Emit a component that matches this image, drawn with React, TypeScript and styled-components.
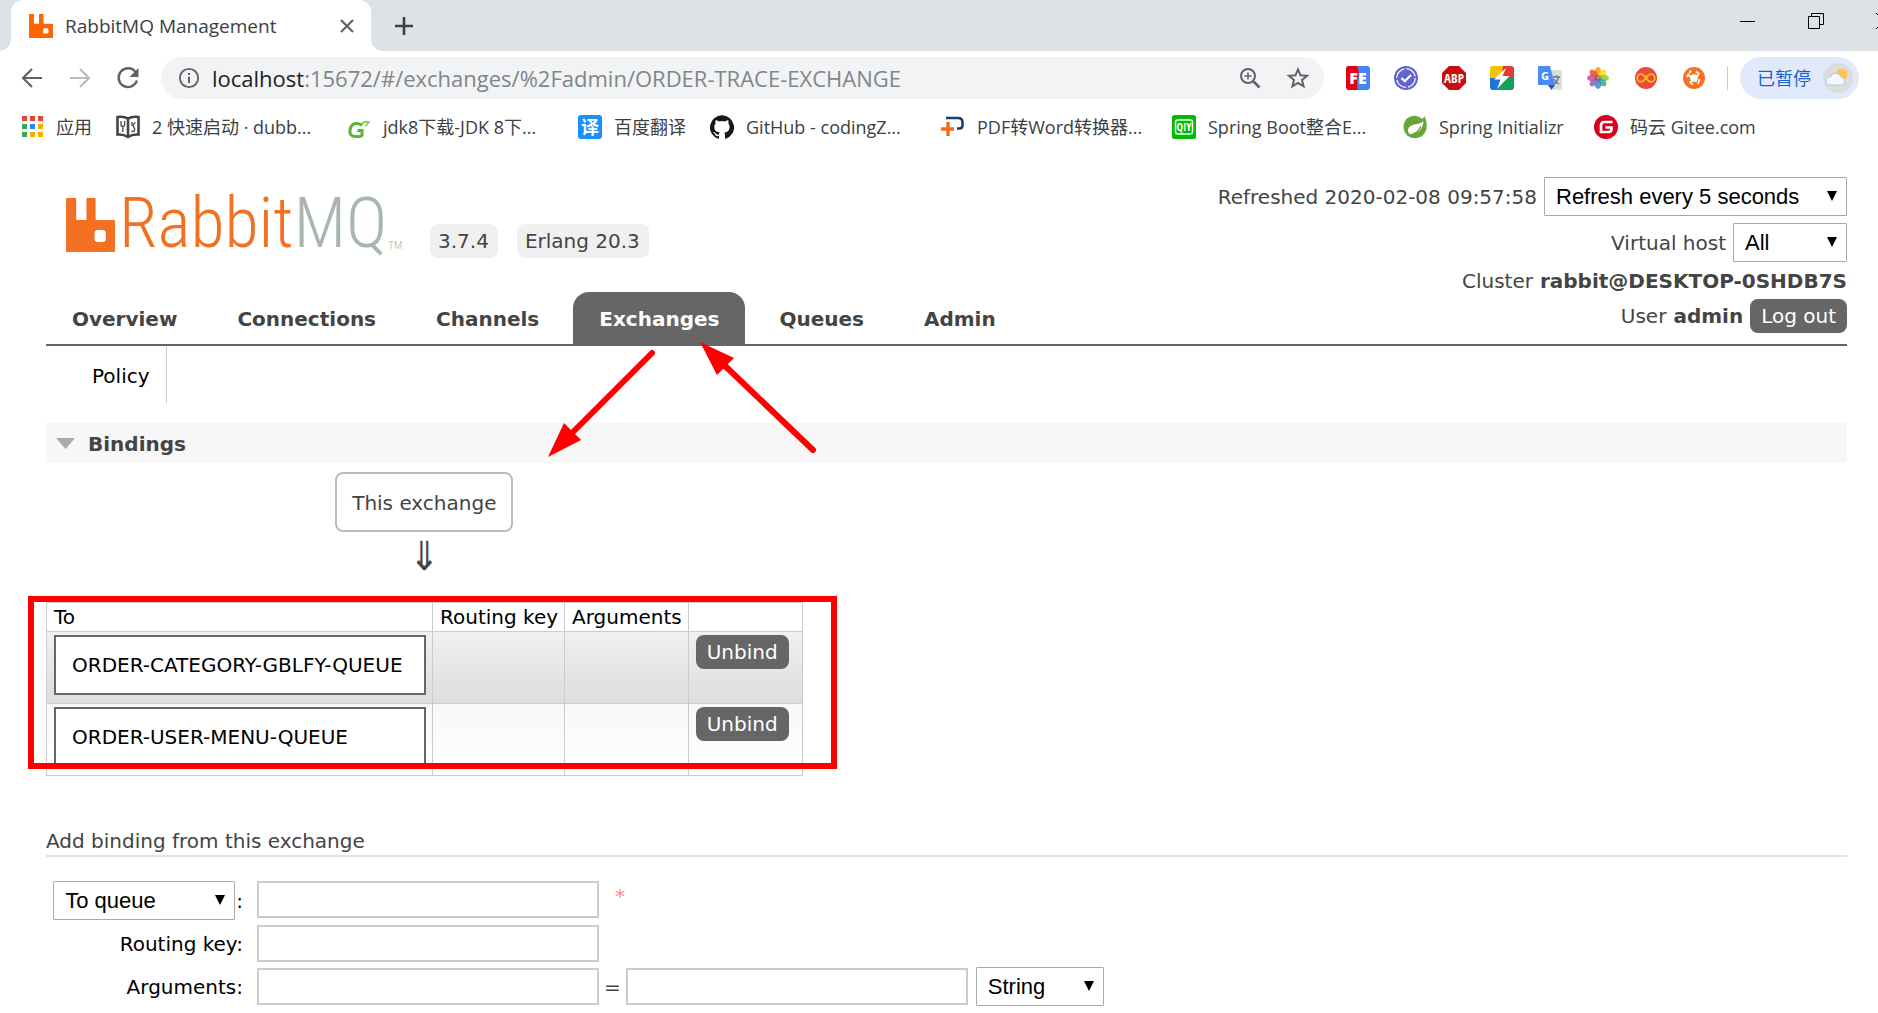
import React from 'react';
import styled, { createGlobalStyle, css } from 'styled-components';

const GlobalStyle = createGlobalStyle`
  *, *::before, *::after { box-sizing: border-box; }
  body {
    margin: 0;
    background: #fff;
    color: #444;
    font: 20px/24px "DejaVu Sans", Verdana, sans-serif;
    overflow: hidden;
  }
  button, input, select { font: inherit; color: inherit; margin: 0; }
  button { border: 0; padding: 0; background: none; cursor: pointer; }
  a { color: inherit; text-decoration: none; }
  svg { display: block; flex: none; }
`;

const uiFont = css`
  font-family: "Open Sans", "Noto Sans CJK SC", sans-serif;
`;

/* ---------- browser window ---------- */

const TabStrip = styled.div`
  ${uiFont}
  display: flex;
  height: 51px;
  padding-left: 11px;
  background: #dee1e6;
  overflow: hidden;
`;

const BrowserTab = styled.div`
  position: relative;
  display: flex;
  align-items: center;
  width: 360px;
  padding: 0 14px 0 18px;
  background: #fff;
  border-radius: 12px 12px 0 0;
  color: #3c4043;

  &::before, &::after {
    content: "";
    position: absolute;
    bottom: 0;
    width: 12px;
    height: 12px;
  }
  &::before {
    left: -12px;
    background: radial-gradient(circle at 0 0, transparent 12px, #fff 12px);
  }
  &::after {
    right: -12px;
    background: radial-gradient(circle at 100% 0, transparent 12px, #fff 12px);
  }
`;

const TabTitle = styled.span`
  flex: 1;
  margin-left: 12px;
  font-size: 19px;
  white-space: nowrap;
`;

const IconButton = styled.button<{ $w?: number }>`
  display: flex;
  align-items: center;
  justify-content: center;
  flex: none;
  width: ${(p) => p.$w ?? 48}px;
`;

const CaptionButtons = styled.div`
  display: flex;
  margin: 0 -40px 10px auto;
`;

const Toolbar = styled.div`
  ${uiFont}
  display: flex;
  align-items: center;
  height: 54px;
  padding: 0 19px 0 8px;
`;

const AddressBar = styled.div`
  display: flex;
  align-items: center;
  flex: 1;
  height: 42px;
  margin: 0 10px 0 9px;
  padding: 0 2px 0 17px;
  border-radius: 21px;
  background: #f1f3f4;
`;

const Url = styled.span`
  flex: 1;
  margin-left: 12px;
  font-size: 22px;
  color: #80868b;
  white-space: nowrap;

  b { font-weight: 400; color: #202124; }
`;

const ToolbarDivider = styled.span`
  width: 1px;
  height: 24px;
  margin: 0 12px 0 9px;
  background: #c8cacd;
`;

const ProfileChip = styled.button`
  display: flex;
  align-items: center;
  gap: 12px;
  height: 42px;
  padding: 0 6px 0 17px;
  border-radius: 21px;
  background: #e1eafa;
  color: #1a5fd0;
  font-size: 18px;
`;

const Bookmarks = styled.nav`
  ${uiFont}
  display: flex;
  align-items: center;
  height: 44px;
  padding-left: 20px;
  font-size: 18px;
  color: #3c4043;
`;

const Bookmark = styled.a<{ $w?: number }>`
  display: flex;
  align-items: center;
  gap: 12px;
  flex: none;
  width: ${(p) => p.$w}px;
  white-space: nowrap;
`;

/* ---------- management page ---------- */

const Page = styled.div`
  position: relative;
  padding: 28px 31px 0 46px;
`;

const Header = styled.header`
  display: flex;
  justify-content: space-between;
  align-items: flex-start;
  height: 115px;
`;

const Brand = styled.div`
  display: flex;
  align-items: flex-end;
  padding: 17px 0 0 20px;
`;

const Logo = styled.a`
  display: flex;
  align-items: flex-end;
  width: 345px;
  height: 58px;
  font: 300 70px/58px "Roboto Condensed", "Open Sans Condensed Light", sans-serif;
  color: #f36f21;
  white-space: nowrap;

  svg { margin: 0 4px 0 0; }
  i { font-style: normal; color: #a9b6ae; }
  sup { font-size: 11px; line-height: 12px; color: #a9b6ae; margin-left: 1px; }
`;

const Badge = styled.span`
  margin: 0 0 -6px 19px;
  padding: 5px 9px 5px 8px;
  border-radius: 8px;
  background: #f0f0f0;
`;

const Status = styled.div`
  display: flex;
  flex-direction: column;
  align-items: flex-end;
`;

const StatusRow = styled.div<{ $h: number }>`
  display: flex;
  align-items: center;
  gap: 7px;
  height: ${(p) => p.$h}px;
`;

const SelectBox = styled.span<{ $w: number }>`
  position: relative;
  display: inline-flex;
  flex: none;
  width: ${(p) => p.$w}px;
  height: 39px;
  color: #000;

  svg {
    position: absolute;
    right: 10px;
    top: 14px;
    pointer-events: none;
  }
`;

const Select = styled.select`
  appearance: none;
  width: 100%;
  padding: 0 11px;
  border: 1px solid #a9a9a9;
  border-radius: 1px;
  background: #fff;
  font: 22px/25px "Liberation Sans", Arial, sans-serif;
`;

const GreyButton = styled.button`
  height: 34px;
  padding: 0 11px;
  border-radius: 8px;
  background: #666;
  color: #fff;
`;

const Menu = styled.nav`
  display: flex;
  gap: 8px;
  border-bottom: 2px solid #666;
  font-weight: 700;
`;

const MenuItem = styled.a<{ $active?: boolean }>`
  padding: 15px 26px 13px;
  border-radius: 16px 16px 0 0;
  background: ${(p) => (p.$active ? '#666' : 'transparent')};
  color: ${(p) => (p.$active ? '#fff' : '#444')};
`;

const SubMenu = styled.nav`
  display: flex;
  height: 57px;
  margin-bottom: 20px;
  color: #000;

  a { padding: 18px 16px 0 46px; border-right: 1px solid #ccc; }
`;

const SectionTitle = styled.h2`
  display: flex;
  align-items: center;
  gap: 13px;
  height: 40px;
  margin: 0;
  padding: 1px 10px 0;
  background: #f7f7f7;
  font-size: 20px;
`;

const Bindings = styled.div`
  display: flex;
  flex-direction: column;
  align-items: center;
  width: max-content;
  padding-top: 9px;
`;

const ExchangeBox = styled.span`
  padding: 17px 15px 15px;
  border: 2px solid #bbb;
  border-radius: 8px;
`;

const DownArrow = styled.span`
  height: 70px;
  padding-top: 12px;
  font-family: "DejaVu Sans Condensed", "DejaVu Sans", sans-serif;
  font-size: 40px;
`;

const TableWrap = styled.div`
  position: relative;
`;

const Highlight = styled.div`
  position: absolute;
  inset: -6px -34px 7px -18px;
  border: 6px solid #f00;
  pointer-events: none;
`;

const Table = styled.table`
  border-collapse: collapse;
  color: #000;

  th, td {
    border: 1px solid #ccc;
    padding: 3px 6px 7px 7px;
    text-align: left;
    vertical-align: top;
    font-weight: 400;
  }
  th { padding: 2px 6px 2px 7px; }
  th:first-child { width: 386px; }
  td:last-child { padding-right: 13px; }
  tbody tr { height: 72px; }
  tbody tr:nth-child(odd) { background: linear-gradient(#f0f0f0, #ddd); }
  tbody tr:nth-child(even) { background: linear-gradient(#f8f8f8, #fff); }
`;

const QueueLink = styled.a`
  display: block;
  padding: 16px;
  border: 2px solid #666;
  background: #fff;
`;

const FormTitle = styled.h3`
  margin: 53px 0 23px;
  padding-bottom: 2px;
  border-bottom: 2px solid #e3e3e3;
  font-size: 20px;
  font-weight: 400;
`;

const Form = styled.form`
  display: grid;
  grid-template-columns: 197px auto;
  column-gap: 14px;
  row-gap: 4px;
`;

const Label = styled.label`
  display: flex;
  align-items: center;
  justify-content: flex-end;
  gap: 1px;
  padding-top: 1px;
  color: #000;
`;

const Field = styled.div`
  display: flex;
  align-items: center;
  height: 39px;
`;

const TextInput = styled.input`
  width: 342px;
  height: 37px;
  padding: 4px 8px;
  border: 2px solid #ccc;
  background: #fff;
`;

const Required = styled.span`
  align-self: flex-start;
  padding: 4px 0 0 16px;
  color: #f88;
`;

const EqualsSign = styled.span`
  padding: 0 5px;
`;

const TypeChoice = styled.span`
  display: flex;
  padding-left: 8px;
`;

const Arrows = styled.svg`
  position: absolute;
  left: 540px;
  top: 190px;
  pointer-events: none;
`;

/* ---------- drawings ---------- */

const Caret = () => (
  <svg width="10" height="10" viewBox="0 0 10 10" aria-hidden="true">
    <path d="M0 0h10L5 10z" fill="#000" />
  </svg>
);

const RabbitMark = ({ w, h, color }: { w: number; h: number; color: string }) => (
  <svg width={w} height={h} viewBox="0 0 48 54" preserveAspectRatio="none" aria-hidden="true">
    <path
      fillRule="evenodd"
      fill={color}
      d="M1 0h8q1 0 1 1v20q0 1 1 1h8q1 0 1-1V1q0-1 1-1h7q1 0 1 1v20q0 1 1 1h17q1 0 1 1v30q0 1-1 1H1q-1 0-1-1V1q0-1 1-1zM31 32q-3 0-3 3v6q0 3 3 3h5q3 0 3-3v-6q0-3-3-3z"
    />
  </svg>
);

const Ico = ({ size = 24, children }: { size?: number; children: React.ReactNode }) => (
  <svg width={size} height={size} viewBox="0 0 24 24" fill="none" aria-hidden="true">
    {children}
  </svg>
);

const svgText = { fontFamily: 'Open Sans, Noto Sans CJK SC, sans-serif', textAnchor: 'middle' as const };

const BackIcon = () => (
  <Ico><path d="M22 12H4M12 3l-9 9 9 9" stroke="#5f6368" strokeWidth="2.2" /></Ico>
);
const ForwardIcon = () => (
  <Ico><path d="M2 12h18M12 3l9 9-9 9" stroke="#babcbe" strokeWidth="2.2" /></Ico>
);
const ReloadIcon = () => (
  <Ico>
    <path d="M19.5 6A9.4 9.4 0 1 0 21 14.500" stroke="#5f6368" strokeWidth="2.400" />
    <path d="M22.500 2v9h-9z" fill="#5f6368" />
  </Ico>
);
const InfoIcon = () => (
  <Ico size={22}>
    <circle cx="12" cy="12" r="10" stroke="#5f6368" strokeWidth="2" />
    <path d="M12 10.500v7M12 6.500v2.300" stroke="#5f6368" strokeWidth="2.200" />
  </Ico>
);
const ZoomIcon = () => (
  <Ico>
    <circle cx="10" cy="10" r="7" stroke="#5f6368" strokeWidth="2" />
    <path d="M15.500 15.500l6 6" stroke="#5f6368" strokeWidth="2.600" />
    <path d="M10 6.500v7M6.500 10h7" stroke="#5f6368" strokeWidth="1.600" />
  </Ico>
);
const StarIcon = () => (
  <Ico>
    <path
      d="M12 3.300l2.500 6 6.500.5-5 4.200 1.600 6.400L12 17l-5.600 3.400L8 14 3 9.800l6.500-.5z"
      stroke="#5f6368"
      strokeWidth="2"
    />
  </Ico>
);

const FeIcon = () => (
  <Ico>
    <rect width="24" height="24" rx="3" fill="#4285f4" />
    <path d="M3 0h8q3 6 1 12t0 12H3q-3 0-3-3V3q0-3 3-3z" fill="#e60012" />
    <text x="12" y="18" fontSize="16" fontWeight="800" fill="#fff" {...svgText}>FE</text>
  </Ico>
);
const CheckBadgeIcon = () => (
  <Ico>
    <circle cx="12" cy="12" r="12" fill="#6563cf" />
    <circle cx="12" cy="12" r="9.300" stroke="#fff" strokeWidth="1.200" strokeDasharray="12.600 2" />
    <path d="M7.500 12l3.300 3.300L17 9" stroke="#fff" strokeWidth="2.200" />
  </Ico>
);
const AbpIcon = () => (
  <Ico>
    <path d="M7 0h10l7 7v10l-7 7H7l-7-7V7z" fill="#c70d0d" />
    <text x="12" y="17" fontSize="13" fontWeight="700" fill="#fff" textAnchor="middle" fontFamily="Open Sans Condensed, sans-serif">ABP</text>
  </Ico>
);
const BoltIcon = () => (
  <Ico>
    <path d="M3 0h12L8 12H0V3q0-3 3-3z" fill="#f5c400" />
    <path d="M13 0h8q3 0 3 3v9H11z" fill="#e53935" />
    <path d="M12 12h12v9q0 3-3 3H9z" fill="#12a05a" />
    <path d="M0 12h13l-4 12H3q-3 0-3-3z" fill="#1e73d8" />
    <path d="M16 2L4 13.500h6.500L7 23l12.500-13h-7z" fill="#fff" />
  </Ico>
);
const TranslateIcon = () => (
  <Ico>
    <path d="M10 4h12q2 0 2 2v16q0 2-2 2h-7z" fill="#dcdcdc" />
    <path d="M1 0h11l5 19H1q-1 0-1-1V1q0-1 1-1z" fill="#4a8cf7" />
    <path d="M10 19h7l-3.500 5z" fill="#3454b4" />
    <path d="M15 11h7M18.500 9v2M20.500 11q-1 5-5 7M16 13q2 4 5 5" stroke="#607d8b" strokeWidth="1.300" />
    <text x="7" y="14" fontSize="11" fontWeight="700" fill="#fff" {...svgText}>G</text>
  </Ico>
);
const petals = ['#f9a01b', '#f4e01f', '#9bcb3b', '#3fb18c', '#4a8fd8', '#8a6fc4', '#c05a9c', '#ee5340'];
const PhotosIcon = () => (
  <Ico>
    {petals.map((c, i) => (
      <ellipse
        key={c}
        cx="12"
        cy="6"
        rx="3.200"
        ry="5"
        fill={c}
        opacity="0.9"
        transform={`rotate(${i * 45} 12 12)`}
      />
    ))}
    <circle cx="12" cy="12" r="3" fill="#6d4a5c" opacity="0.5" />
  </Ico>
);
const InfinityIcon = () => (
  <Ico>
    <circle cx="12" cy="12" r="11" fill="#e94b3d" />
    <path
      d="M12 12c-2-3-3.300-3.800-5-3.800a3.800 3.800 0 0 0 0 7.600c1.700 0 3-.8 5-3.800s3.300-3.800 5-3.800a3.800 3.800 0 0 1 0 7.600c-1.700 0-3-.8-5-3.800z"
      stroke="#fbb917"
      strokeWidth="1.800"
    />
  </Ico>
);
const OrangeIcon = () => (
  <Ico>
    <circle cx="12" cy="12" r="11" fill="#f97020" />
    <circle cx="12" cy="12" r="3.800" fill="#fff" />
    <path d="M6.500 9l8 6.500M17 8l-9.500 9M7 7.500L5 11M7.500 7l1.500-2.500M17.500 8L14 5.500M8 16.500l3 2M17.500 13l-1.500 5" stroke="#fff" strokeWidth="1.800" />
  </Ico>
);
const WeatherAvatar = () => (
  <svg width="30" height="30" viewBox="0 0 30 30" aria-hidden="true">
    <circle cx="15" cy="15" r="15" fill="#dcdcda" />
    <circle cx="19" cy="11" r="5.500" fill="#fbc54b" />
    <path d="M7 22a4 4 0 0 1 .5-8 5.500 5.500 0 0 1 10.500 0 4.200 4.200 0 0 1 1 8z" fill="#f4f9ff" stroke="#a9cdf2" />
  </svg>
);

const appColors = ['#ea4335', '#ea4335', '#ea4335', '#34a853', '#1a8cff', '#fbab00', '#34a853', '#fbab00', '#fbab00'];
const AppsIcon = () => (
  <Ico>
    {appColors.map((c, i) => (
      <rect key={i} x={2 + (i % 3) * 8} y={1 + Math.floor(i / 3) * 8} width="5" height="5" fill={c} />
    ))}
  </Ico>
);
const BookIcon = () => (
  <Ico>
    <path d="M1.500 2q6-1 10.500 1.500Q16.500 1 22.500 2v17.500q-6-.5-10.500 2.500-4.500-3-10.500-2.500z" fill="#fff" stroke="#444" strokeWidth="2.600" />
    <path d="M12 3v19" stroke="#444" strokeWidth="2.600" />
    <path d="M5 6v3.500q0 2 1.800 2t1.800-2V6M6.800 11v6M15.500 16c3 1.500 4-1.500 2.500-3.500s0-5 1.500-4.500M16 7v4" stroke="#555" strokeWidth="1.400" />
  </Ico>
);
const JdkIcon = () => (
  <Ico>
    <path d="M15 10.500Q13 8 8.500 8.500T3 15 8 21.500t7-1V15.500h-4.500" stroke="#5ab52a" strokeWidth="3" />
    <path d="M15 8.500q3-2.500 7-1.500L18.500 11" stroke="#83cb3e" strokeWidth="1.700" />
  </Ico>
);
const FanyiIcon = () => (
  <Ico>
    <rect width="24" height="24" rx="3" fill="#1890ff" />
    <text x="12" y="18.500" fontSize="18" fontWeight="700" fill="#fff" {...svgText}>译</text>
  </Ico>
);
const GithubIcon = () => (
  <Ico>
    <path
      fill="#171515"
      d="M12 .3a12 12 0 0 0-3.800 23.400c.6.100.8-.3.800-.6v-2c-3.300.7-4-1.600-4-1.600-.6-1.400-1.400-1.800-1.400-1.800-1-.7.100-.7.100-.7 1.200 0 1.900 1.200 1.900 1.200 1 1.800 2.800 1.300 3.500 1 0-.8.400-1.300.7-1.600-2.700-.3-5.500-1.300-5.500-6 0-1.200.500-2.300 1.300-3.100-.2-.4-.6-1.600 0-3.200 0 0 1-.3 3.400 1.200a11.500 11.500 0 0 1 6 0c2.300-1.500 3.300-1.200 3.300-1.200.6 1.600.2 2.800 0 3.200.9.800 1.300 1.900 1.300 3.200 0 4.600-2.800 5.600-5.500 5.900.5.400.9 1 .9 2.200v3.300c0 .3.100.7.800.6A12 12 0 0 0 12 .3"
    />
  </Ico>
);
const PdfIcon = () => (
  <Ico>
    <path d="M5 3h12q4.500 0 4.500 4.500v3q0 3-3 3H16" stroke="#14406b" strokeWidth="2.600" />
    <path d="M7 7v14M0 14h13" stroke="#f26a1b" strokeWidth="3.400" />
  </Ico>
);
const QiyIcon = () => (
  <Ico>
    <rect width="24" height="24" rx="2.500" fill="#0b0" />
    <rect x="3.500" y="5" width="17" height="14" rx="2.500" stroke="#fff" strokeWidth="1.500" />
    <text x="12" y="16" fontSize="11" fontWeight="700" fill="#fff" textAnchor="middle" fontFamily="Open Sans Condensed, sans-serif">QIY</text>
  </Ico>
);
const SpringIcon = () => (
  <Ico>
    <path d="M21.500 1q4 9 1 15.500A11.500 11.500 0 1 1 4 3.500 11.500 11.500 0 0 1 19.500 4q1.200-1.300 2-3z" fill="#68a43a" />
    <path d="M20.500 5.500C19 10 9 8 6 12.500c-2 3.200-.5 6 1.200 6.800C15 18.500 20 15 20.500 5.500z" fill="#fff" />
    <path d="M4.500 20.500q9.500-1 13.500-9" stroke="#68a43a" strokeWidth="1.500" />
  </Ico>
);
const GiteeIcon = () => (
  <Ico>
    <circle cx="12" cy="12" r="12" fill="#d9001b" />
    <path d="M18.500 7H10.500Q7 7 7 10.500V17h7.500q3 0 3-3v-1.500h-6" stroke="#fff" strokeWidth="2.600" />
  </Ico>
);

const extensions = [
  { name: 'FE Helper', icon: <FeIcon /> },
  { name: 'Checker', icon: <CheckBadgeIcon /> },
  { name: 'Adblock Plus', icon: <AbpIcon /> },
  { name: 'Accelerator', icon: <BoltIcon /> },
  { name: 'Translate', icon: <TranslateIcon /> },
  { name: 'Photos', icon: <PhotosIcon /> },
  { name: 'Infinity', icon: <InfinityIcon /> },
  { name: 'Tools', icon: <OrangeIcon /> },
];

const bookmarks = [
  { label: '应用', icon: <AppsIcon />, w: 96 },
  { label: '2 快速启动 · dubb...', icon: <BookIcon />, w: 231 },
  { label: 'jdk8下载-JDK 8下...', icon: <JdkIcon />, w: 231 },
  { label: '百度翻译', icon: <FanyiIcon />, w: 132 },
  { label: 'GitHub - codingZ...', icon: <GithubIcon />, w: 231 },
  { label: 'PDF转Word转换器...', icon: <PdfIcon />, w: 231 },
  { label: 'Spring Boot整合E...', icon: <QiyIcon />, w: 231 },
  { label: 'Spring Initializr', icon: <SpringIcon />, w: 191 },
  { label: '码云 Gitee.com', icon: <GiteeIcon />, w: 191 },
];

const menu = ['Overview', 'Connections', 'Channels', 'Exchanges', 'Queues', 'Admin'];
const queues = ['ORDER-CATEGORY-GBLFY-QUEUE', 'ORDER-USER-MENU-QUEUE'];

function Dropdown({ id, label, width, options }: { id: string; label?: string; width: number; options: string[] }) {
  return (
    <SelectBox $w={width}>
      <Select id={id} aria-label={label}>
        {options.map((o) => <option key={o}>{o}</option>)}
      </Select>
      <Caret />
    </SelectBox>
  );
}

function BrowserChrome() {
  return (
    <>
      <TabStrip>
        <BrowserTab>
          <RabbitMark w={24} h={24} color="#ff6600" />
          <TabTitle>RabbitMQ Management</TabTitle>
          <IconButton $w={20} aria-label="Close tab">
            <svg width="14" height="14" viewBox="0 0 14 14"><path d="M1 1l12 12M13 1L1 13" stroke="#5f6368" strokeWidth="2.200" /></svg>
          </IconButton>
        </BrowserTab>
        <IconButton $w={66} aria-label="New tab">
          <svg width="18" height="18" viewBox="0 0 18 18"><path d="M9 0v18M0 9h18" stroke="#3c4043" strokeWidth="2.600" /></svg>
        </IconButton>
        <CaptionButtons>
          <IconButton $w={68} aria-label="Minimize">
            <svg width="16" height="16" viewBox="0 0 16 16"><path d="M0 8.500h15" stroke="#000" /></svg>
          </IconButton>
          <IconButton $w={68} aria-label="Restore">
            <svg width="16" height="16" viewBox="0 0 16 16" fill="none" stroke="#000"><path d="M.5 3.500h11v12H.5zM3.500 3V.5h12v11H12" /></svg>
          </IconButton>
          <IconButton $w={68} aria-label="Close">
            <svg width="16" height="16" viewBox="0 0 16 16"><path d="M0 0l16 16M16 0L0 16" stroke="#000" /></svg>
          </IconButton>
        </CaptionButtons>
      </TabStrip>
      <Toolbar>
        <IconButton aria-label="Back"><BackIcon /></IconButton>
        <IconButton aria-label="Forward"><ForwardIcon /></IconButton>
        <IconButton aria-label="Reload"><ReloadIcon /></IconButton>
        <AddressBar>
          <InfoIcon />
          <Url><b>localhost</b>:15672/#/exchanges/%2Fadmin/ORDER-TRACE-EXCHANGE</Url>
          <IconButton aria-label="Zoom"><ZoomIcon /></IconButton>
          <IconButton aria-label="Bookmark this page"><StarIcon /></IconButton>
        </AddressBar>
        {extensions.map((e) => <IconButton key={e.name} aria-label={e.name}>{e.icon}</IconButton>)}
        <ToolbarDivider />
        <ProfileChip>已暂停<WeatherAvatar /></ProfileChip>
      </Toolbar>
      <Bookmarks>
        {bookmarks.map((b) => (
          <Bookmark key={b.label} href="#" $w={b.w}>{b.icon}{b.label}</Bookmark>
        ))}
      </Bookmarks>
    </>
  );
}

export default function App() {
  return (
    <>
      <GlobalStyle />
      <BrowserChrome />
      <Page>
        <Header>
          <Brand>
            <Logo href="#">
              <RabbitMark w={49} h={54} color="#f36f21" />
              Rabbit<i>MQ</i><sup>TM</sup>
            </Logo>
            <Badge>3.7.4</Badge>
            <Badge>Erlang 20.3</Badge>
          </Brand>
          <Status>
            <StatusRow $h={39}>
              <label htmlFor="refresh">Refreshed 2020-02-08 09:57:58</label>
              <Dropdown id="refresh" width={303} options={['Refresh every 5 seconds', 'Refresh every 30 seconds', 'Do not refresh']} />
            </StatusRow>
            <StatusRow $h={53}>
              <label htmlFor="vhost">Virtual host</label>
              <Dropdown id="vhost" width={114} options={['All', '/', '/admin']} />
            </StatusRow>
            <StatusRow $h={24}>Cluster <b>rabbit@DESKTOP-0SHDB7S</b></StatusRow>
            <StatusRow $h={46}>User <b>admin</b><GreyButton>Log out</GreyButton></StatusRow>
          </Status>
        </Header>
        <Menu>
          {menu.map((m) => <MenuItem key={m} href="#" $active={m === 'Exchanges'}>{m}</MenuItem>)}
        </Menu>
        <SubMenu><a href="#">Policy</a></SubMenu>

        <SectionTitle>
          <svg width="19" height="11" viewBox="0 0 19 11" aria-hidden="true"><path d="M0 0h19L9.500 11z" fill="#aaa" /></svg>
          Bindings
        </SectionTitle>
        <Bindings>
          <ExchangeBox>This exchange</ExchangeBox>
          <DownArrow>⇓</DownArrow>
          <TableWrap>
            <Table>
              <thead>
                <tr><th>To</th><th>Routing key</th><th>Arguments</th><th /></tr>
              </thead>
              <tbody>
                {queues.map((q) => (
                  <tr key={q}>
                    <td><QueueLink href="#">{q}</QueueLink></td>
                    <td />
                    <td />
                    <td><GreyButton>Unbind</GreyButton></td>
                  </tr>
                ))}
              </tbody>
            </Table>
            <Highlight />
          </TableWrap>
        </Bindings>

        <FormTitle>Add binding from this exchange</FormTitle>
        <Form>
          <Label htmlFor="destination">
            <Dropdown id="destination-type" label="Destination type" width={182} options={['To queue', 'To exchange']} />:
          </Label>
          <Field><TextInput id="destination" /><Required>*</Required></Field>
          <Label htmlFor="routing-key">Routing key:</Label>
          <Field><TextInput id="routing-key" /></Field>
          <Label htmlFor="argument-key">Arguments:</Label>
          <Field>
            <TextInput id="argument-key" />
            <EqualsSign>=</EqualsSign>
            <TextInput aria-label="Argument value" />
            <TypeChoice>
              <Dropdown id="argument-type" label="Argument type" width={128} options={['String', 'Number', 'Boolean', 'List']} />
            </TypeChoice>
          </Field>
        </Form>

        <Arrows width="290" height="130" viewBox="540 339 290 130" aria-hidden="true">
          <path d="M652 353L570 435M813 450L722 363" stroke="#f00" strokeWidth="6" strokeLinecap="round" />
          <path d="M548 457l16-34 17 17zM700 342l34 16-17 17z" fill="#f00" />
        </Arrows>
      </Page>
    </>
  );
}
